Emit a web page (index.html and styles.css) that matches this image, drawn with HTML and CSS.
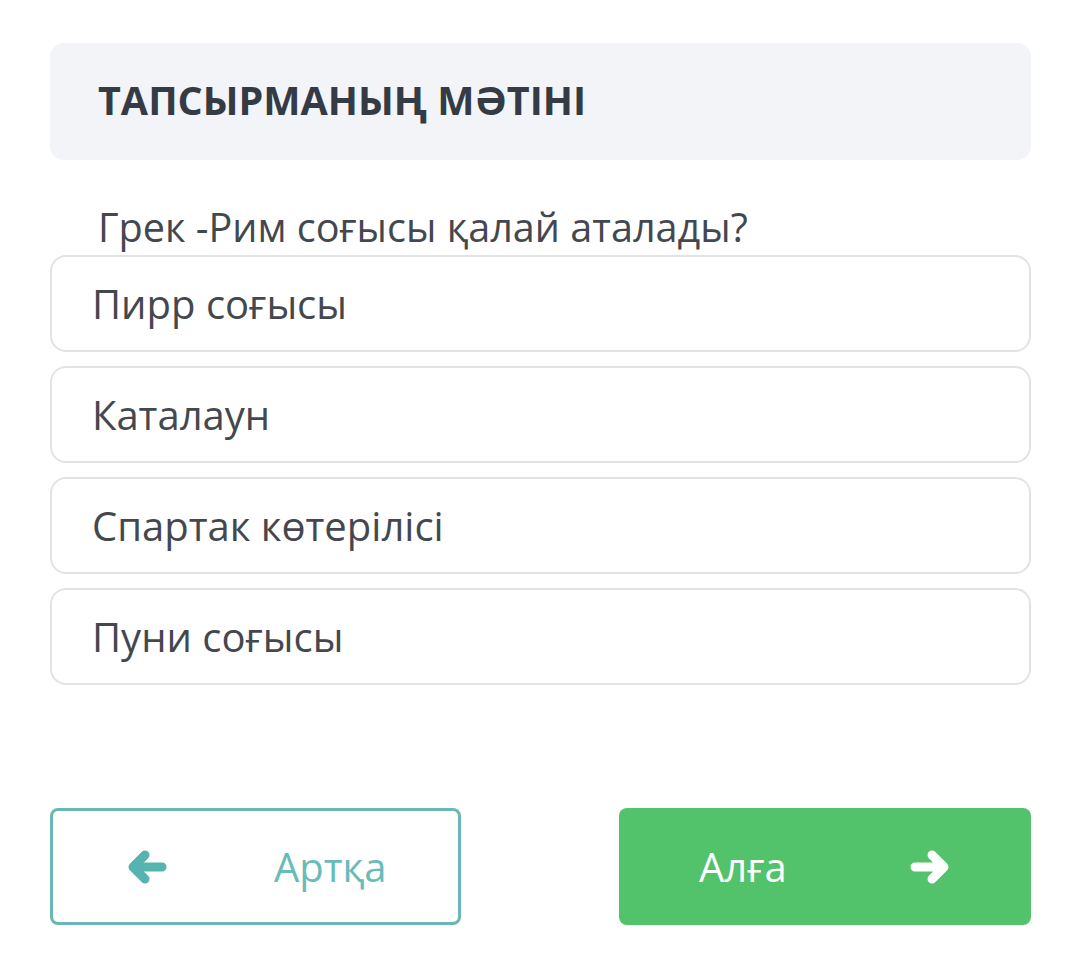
FILE: index.html
```html
<!DOCTYPE html>
<html lang="kk">
<head>
  <meta charset="UTF-8" />
  <meta name="viewport" content="width=device-width, initial-scale=1" />
  <title>Тапсырма</title>
  <link rel="stylesheet" href="styles.css">
</head>
<body>

  <main class="task">
    <header class="task-head">
      <h1>ТАПСЫРМАНЫҢ МӘТІНІ</h1>
    </header>

    <p class="question">Грек -Рим соғысы қалай аталады?</p>

    <ul class="answers">
      <li class="answer">Пирр соғысы</li>
      <li class="answer">Каталаун</li>
      <li class="answer">Спартак көтерілісі</li>
      <li class="answer">Пуни соғысы</li>
    </ul>

    <nav class="task-nav">
      <button class="btn btn-back">
        <svg class="arrow" viewBox="0 0 40 34" aria-hidden="true">
          <path d="M35 17H6M18 5L6 17l12 12" />
        </svg>
        <span>Артқа</span>
      </button>
      <button class="btn btn-next">
        <span>Алға</span>
        <svg class="arrow" viewBox="0 0 40 34" aria-hidden="true">
          <path d="M5 17h29M22 5l12 12-12 12" />
        </svg>
      </button>
    </nav>
  </main>

</body>
</html>
```

FILE: styles.css
```css
body {
  margin: 0;
  background: #fff;
  font-family: 'Open Sans', 'Noto Sans', sans-serif;
  color: #41454b;
}

.task {
  width: 981px;
  padding: 43px 0 0 50px;
}

.task-head {
  background: #f2f4f8;
  border-radius: 14px;
  height: 117px;
  display: flex;
  align-items: center;
  padding-left: 48px;
}
.task-head h1 {
  margin: 0 0 3px;
  font-size: 39.5px;
  font-weight: 700;
  color: #353b45;
}

.question {
  margin: 42px 0 3px 48px;
  font-size: 39.6px;
  line-height: 50px;
  color: #44484e;
}

.answers {
  list-style: none;
  margin: 0;
  padding: 0;
  display: flex;
  flex-direction: column;
  gap: 14px;
}
.answer {
  height: 93px;
  border: 2px solid #e1e4e7;
  border-radius: 16px;
  padding-left: 40px;
  display: flex;
  align-items: center;
  font-size: 40px;
  color: #44484e;
}

.task-nav {
  margin-top: 123px;
  display: flex;
  justify-content: space-between;
}
.btn {
  width: 412px;
  height: 117px;
  border-radius: 8px;
  display: flex;
  align-items: center;
  font-family: inherit;
  font-size: 40px;
  cursor: pointer;
  box-sizing: border-box;
}
.btn .arrow {
  width: 40px;
  height: 34px;
  fill: none;
  stroke-width: 9;
  stroke-linecap: round;
  stroke-linejoin: round;
}
.btn-back {
  width: 411px;
  background: #fff;
  border: 3px solid #6ab7b4;
  color: #68bcb8;
  padding-left: 74px;
  gap: 107px;
}
.btn-back .arrow {
  stroke: #56b4b0;
}
.btn-next {
  background: #52c26b;
  border: none;
  color: #fff;
  padding-left: 80px;
  gap: 123px;
}
.btn-next .arrow {
  stroke: #fff;
}
```
